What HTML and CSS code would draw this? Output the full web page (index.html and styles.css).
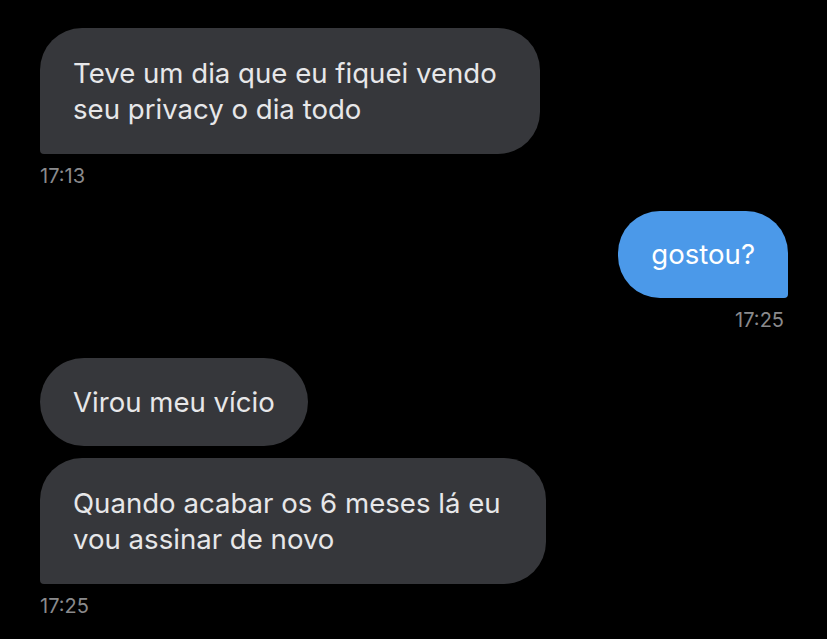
FILE: index.html
```html
<!DOCTYPE html>
<html lang="pt">
<head>
<meta charset="utf-8">
<link rel="stylesheet" href="styles.css">
</head>
<body>
<div class="chat">
  <div class="msg in">
    <div class="bubble tail-left b1">Teve um dia que eu fiquei vendo seu privacy o dia todo</div>
    <div class="time">17:13</div>
  </div>
  <div class="msg out">
    <div class="bubble blue tail-right">gostou?</div>
    <div class="time">17:25</div>
  </div>
  <div class="msg in group">
    <div class="bubble pill">Virou meu vício</div>
    <div class="bubble tail-left b4">Quando acabar os 6 meses lá eu vou assinar de novo</div>
    <div class="time">17:25</div>
  </div>
</div>
</body>
</html>
```
FILE: styles.css
```css
html, body {
  margin: 0;
  padding: 0;
  background: #000;
}
body {
  font-family: Inter, Roboto, "Liberation Sans", sans-serif;
  width: 827px;
  height: 639px;
  overflow: hidden;
}
.chat {
  display: flex;
  flex-direction: column;
  padding: 28px 39px 0 40px;
}
.msg {
  display: flex;
  flex-direction: column;
}
.msg.in { align-items: flex-start; }
.msg.out { align-items: flex-end; margin-top: 23px; }
.msg.group { margin-top: 26px; gap: 12px; }
.msg.group .time { margin-top: -2px; }
.bubble {
  background: #36373b;
  color: #e7e7e9;
  font-size: 27.6px;
  line-height: 36px;
  padding: 27px 33px;
  border-radius: 42px;
  box-sizing: border-box;
}
.b1 { max-width: 500px; }
.b4 { max-width: 506px; }
.tail-left { border-bottom-left-radius: 4px; }
.tail-right { border-bottom-right-radius: 4px; }
.pill { border-radius: 44px; padding: 26px 33px; }
.blue {
  background: #4b99e9;
  color: #fff;
  padding: 25px 33px 26px;
}
.time {
  color: #8a8a8c;
  font-size: 20px;
  line-height: 24px;
  margin-top: 10px;
}
.out .time { margin-right: 4px; }
```
